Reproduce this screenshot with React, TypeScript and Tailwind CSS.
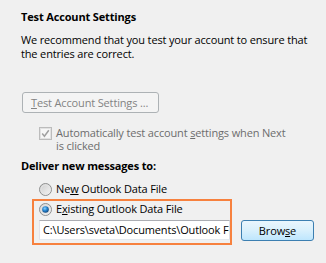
import React from 'react';

const font = { fontFamily: '"Open Sans", "Noto Sans", sans-serif' };

function CheckBox() {
  return (
    <svg width="13" height="13" viewBox="0 0 13 13" className="shrink-0">
      <rect x="0.5" y="0.5" width="12" height="12" fill="#f4f4f4" stroke="#bcbcbc" />
      <rect x="1.5" y="1.5" width="10" height="10" fill="#f7f7f7" stroke="#e2e2e2" />
      <path d="M3.2 6.6 L5.4 9.2 L9.8 3.2" fill="none" stroke="#a0a0a0" strokeWidth="1.5" />
    </svg>
  );
}

function Radio({ checked }: { checked?: boolean }) {
  return (
    <svg width="13" height="13" viewBox="0 0 13 13" className="shrink-0">
      <defs>
        <linearGradient id="rbg" x1="0" y1="0" x2="1" y2="1">
          <stop offset="0" stopColor="#cbcbcb" />
          <stop offset="1" stopColor="#f7f7f7" />
        </linearGradient>
        <radialGradient id="rdot" cx="0.4" cy="0.35" r="0.7">
          <stop offset="0" stopColor="#8fd3ff" />
          <stop offset="0.45" stopColor="#2a8ad4" />
          <stop offset="1" stopColor="#0f3f73" />
        </radialGradient>
      </defs>
      <circle cx="6.5" cy="6.5" r="6" fill="url(#rbg)" stroke="#8e8f8f" />
      <circle cx="6.5" cy="6.5" r="4.6" fill="none" stroke="#e6e6e6" strokeWidth="0.8" />
      {checked && <circle cx="6.5" cy="6.5" r="3.3" fill="url(#rdot)" />}
    </svg>
  );
}

export default function App() {
  return (
    <div className="w-[326px] h-[263px] overflow-hidden bg-[#f0f0f0] text-[11px] tracking-[-0.15px] text-black" style={font}>
      <div className="pl-[21px] pt-[9px] flex flex-col">
        <h1 className="font-bold leading-[16px]">Test Account Settings</h1>
        <p className="mt-[8px] w-[300px] leading-[14px]">
          We recommend that you test your account to ensure that the entries are correct.
        </p>

        <button
          disabled
          className="mt-[31px] ml-[1px] w-[137px] h-[21px] rounded-[3px] border border-[#adb2b5] bg-[#f4f4f4] text-left pl-[8px] text-[#838383] leading-[19px] whitespace-nowrap"
        >
          <span className="underline">T</span>est Account Settings ...
        </button>

        <div className="mt-[13px] ml-[18px] flex items-start gap-[4px] text-[#6d6d6d]">
          <div className="pt-[1px]"><CheckBox /></div>
          <span className="w-[232px] leading-[13px]">
            Automatically test account <span className="underline">s</span>ettings when Next is clicked
          </span>
        </div>

        <h2 className="mt-[6px] font-bold leading-[15px]">Deliver new messages to:</h2>

        <div className="mt-[9px] ml-[18px] flex items-center gap-[4px] h-[15px]">
          <Radio />
          <span>Ne<span className="underline">w</span> Outlook Data File</span>
        </div>

        <div className="flex items-end gap-[9px] mt-[2px]">
          <div className="ml-[11px] w-[200px] border-2 border-[#f7813e] pl-[5px] pt-[1px] pb-[3px]">
            <div className="flex items-center gap-[4px] h-[15px]">
              <Radio checked />
              <span>E<span className="underline">x</span>isting Outlook Data File</span>
            </div>
            <div className="mt-[3px] h-[20px] w-[191px] border border-[#abadb3] border-b-[#e3e9ef] border-l-[#e2e3ea] border-r-[#dbdfe6] bg-white overflow-hidden whitespace-nowrap pl-[3px] leading-[18px]">
              C:\Users\sveta\Documents\Outlook Files\Outlook.pst
            </div>
          </div>
          <button className="mb-[4px] w-[73px] h-[21px] rounded-[3px] border border-[#3c7fb1] bg-linear-to-b from-[#eaf6fd] via-[#d9f0fc] to-[#bee6fd] leading-[19px] text-center">
            Brow<span className="underline">s</span>e
          </button>
        </div>
      </div>
    </div>
  );
}
